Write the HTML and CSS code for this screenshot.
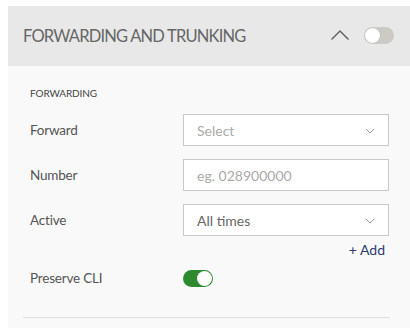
FILE: index.html
```html
<!DOCTYPE html>
<html>
<head>
	<meta charset="utf-8">
	<title>Forwarding and trunking</title>
	<link rel="stylesheet" href="styles.css">
</head>
<body>

<div class="panel">
	<div class="panel-head">
		<span class="panel-title">FORWARDING AND TRUNKING</span>
		<svg class="chevron-up" width="20" height="12" viewBox="0 0 20 12">
			<path d="M1.5 10.5 L10 2 L18.5 10.5" fill="none" stroke="#666" stroke-width="1.5"/>
		</svg>
		<span class="switch switch-off"><span class="knob"></span></span>
	</div>
	<div class="panel-body">
		<div class="section-label">FORWARDING</div>

		<div class="row">
			<label class="row-label">Forward</label>
			<div class="field select">
				<span class="placeholder">Select</span>
				<svg class="caret" width="10" height="6" viewBox="0 0 10 6"><path d="M1 1 L5 5 L9 1" fill="none" stroke="#999" stroke-width="1"/></svg>
			</div>
		</div>
		<div class="row">
			<label class="row-label">Number</label>
			<div class="field">
				<span class="placeholder">eg. 028900000</span>
			</div>
		</div>
		<div class="row">
			<label class="row-label">Active</label>
			<div class="field select">
				<span class="value">All times</span>
				<svg class="caret" width="10" height="6" viewBox="0 0 10 6"><path d="M1 1 L5 5 L9 1" fill="none" stroke="#999" stroke-width="1"/></svg>
			</div>
		</div>
		<div class="add-line"><a class="add">+ Add</a></div>
		<div class="row row-toggle">
			<label class="row-label">Preserve CLI</label>
			<span class="switch switch-on"><span class="knob"></span></span>
		</div>
		<div class="divider"></div>
	</div>
</div>

</body>
</html>
```

FILE: styles.css
```css
* {
	margin: 0;
	padding: 0;
	box-sizing: border-box;
}
body {
	background: #fff;
	font-family: Lato, "Open Sans", sans-serif;
	color: #555;
}
.panel {
	margin: 6px 0 0 8px;
}
.panel-head {
	height: 60px;
	background: #e8e8e8;
	display: flex;
	align-items: center;
	padding: 0 16px 0 15px;
}
.panel-title {
	flex: 1;
	font-size: 16.5px;
	color: #666;
	letter-spacing: -0.8px;
	margin-top: -1px;
}
.chevron-up {
	margin-right: 14px;
	margin-top: -2px;
}
.switch {
	position: relative;
	display: inline-block;
	width: 30px;
	height: 17px;
	border-radius: 9px;
}
.switch .knob {
	position: absolute;
	top: 1px;
	width: 15px;
	height: 15px;
	border-radius: 50%;
	background: #fff;
}
.switch-off {
	background: #cbcac4;
	margin-top: -2px;
}
.switch-off .knob {
	left: 1px;
	box-shadow: 0 0 1px rgba(0, 0, 0, .2);
}
.switch-on {
	background: #2f8a2f;
}
.switch-on .knob {
	right: 1px;
}
.panel-body {
	background: #f9f9f9;
	padding: 22px 20px 10px 22px;
	height: 262px;
}
.section-label {
	font-size: 10px;
	letter-spacing: -0.1px;
	color: #444;
	margin-bottom: 15px;
	margin-top: -1px;
	line-height: 12px;
}
.row {
	display: flex;
	align-items: center;
	margin-bottom: 13px;
}
.row-label {
	width: 153px;
	font-size: 13.5px;
	color: #555;
	margin-top: -1px;
	letter-spacing: -0.2px;
}
.field {
	width: 206px;
	height: 32px;
	border: 1px solid #c9c9c9;
	background: #fff;
	display: flex;
	align-items: center;
	justify-content: space-between;
	padding: 0 13px 0 13px;
	font-size: 14px;
}
.placeholder {
	color: #aaa;
}
.value {
	color: #666;
}
.caret {
	margin-top: 2px;
}
.add-line {
	display: flex;
	justify-content: flex-end;
	margin-top: -8px;
	padding-right: 5px;
	height: 20px;
}
.add {
	font-size: 14px;
	color: #2c3d6e;
}
.row-toggle {
	margin-top: 9px;
}
.divider {
	margin: 30px 0 0 -7px;
	height: 1px;
	background: #e0e0e0;
}
```
